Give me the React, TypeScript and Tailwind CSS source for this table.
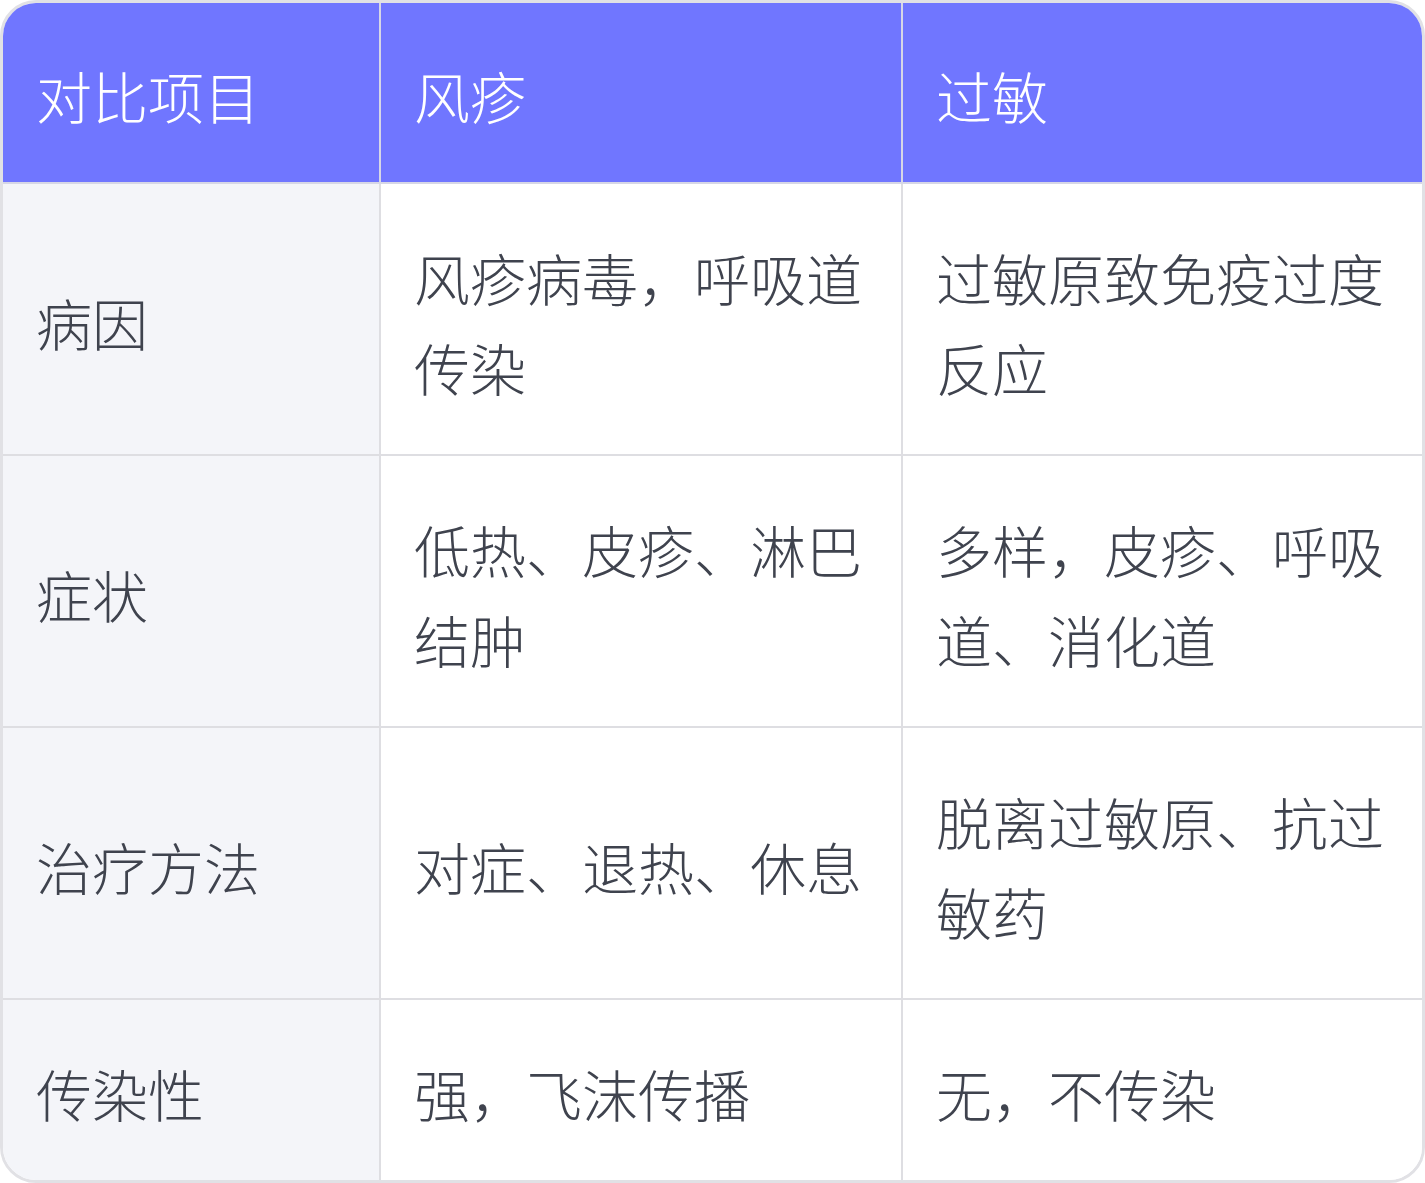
const rows = [
  { label: '病因', a: '风疹病毒，呼吸道传染', b: '过敏原致免疫过度反应' },
  { label: '症状', a: '低热、皮疹、淋巴结肿', b: '多样，皮疹、呼吸道、消化道' },
  { label: '治疗方法', a: '对症、退热、休息', b: '脱离过敏原、抗过敏药' },
  { label: '传染性', a: '强，飞沫传播', b: '无，不传染' },
]

const App = () => {
  return (
    <div
      className="w-[1425px] bg-white"
      style={{ fontFamily: '"Noto Sans CJK SC", "Noto Sans", sans-serif' }}
    >
      <div className="border-[3px] border-[#e1e1e5] rounded-[36px] overflow-hidden">
        <div className="grid grid-cols-[378px_522px_519px] text-[56px] leading-[90px] font-light">
          {/* header */}
          <div className="bg-[#7076ff] text-white pl-[33px] pr-[34px] pt-[47px] pb-[42px] border-r-2 border-b-2 border-[#d6d7e6]">对比项目</div>
          <div className="bg-[#7076ff] text-white pl-[33px] pr-[34px] pt-[47px] pb-[42px] border-r-2 border-b-2 border-[#d6d7e6]">风疹</div>
          <div className="bg-[#7076ff] text-white pl-[33px] pr-[34px] pt-[47px] pb-[42px] border-b-2 border-[#d6d7e6]">过敏</div>

          {rows.map((r, i) => {
            const last = i === rows.length - 1
            return (
              <div key={r.label} className="contents">
                <div
                  className={`bg-[#f4f5f9] text-[#3f434e] pl-[33px] pr-[34px] pt-[48px] pb-[42px] border-r-2 border-[#dedee2] flex items-center ${last ? '' : 'border-b-2'}`}
                >
                  {r.label}
                </div>
                <div
                  className={`bg-white text-[#3f434e] pl-[33px] pr-[34px] pt-[48px] pb-[42px] border-r-2 border-[#dedee2] flex items-center ${last ? '' : 'border-b-2'}`}
                >
                  <span>{r.a}</span>
                </div>
                <div
                  className={`bg-white text-[#3f434e] pl-[33px] pr-[34px] pt-[48px] pb-[42px] border-[#dedee2] flex items-center ${last ? '' : 'border-b-2'}`}
                >
                  <span>{r.b}</span>
                </div>
              </div>
            )
          })}
        </div>
      </div>
    </div>
  )
}

export default App
